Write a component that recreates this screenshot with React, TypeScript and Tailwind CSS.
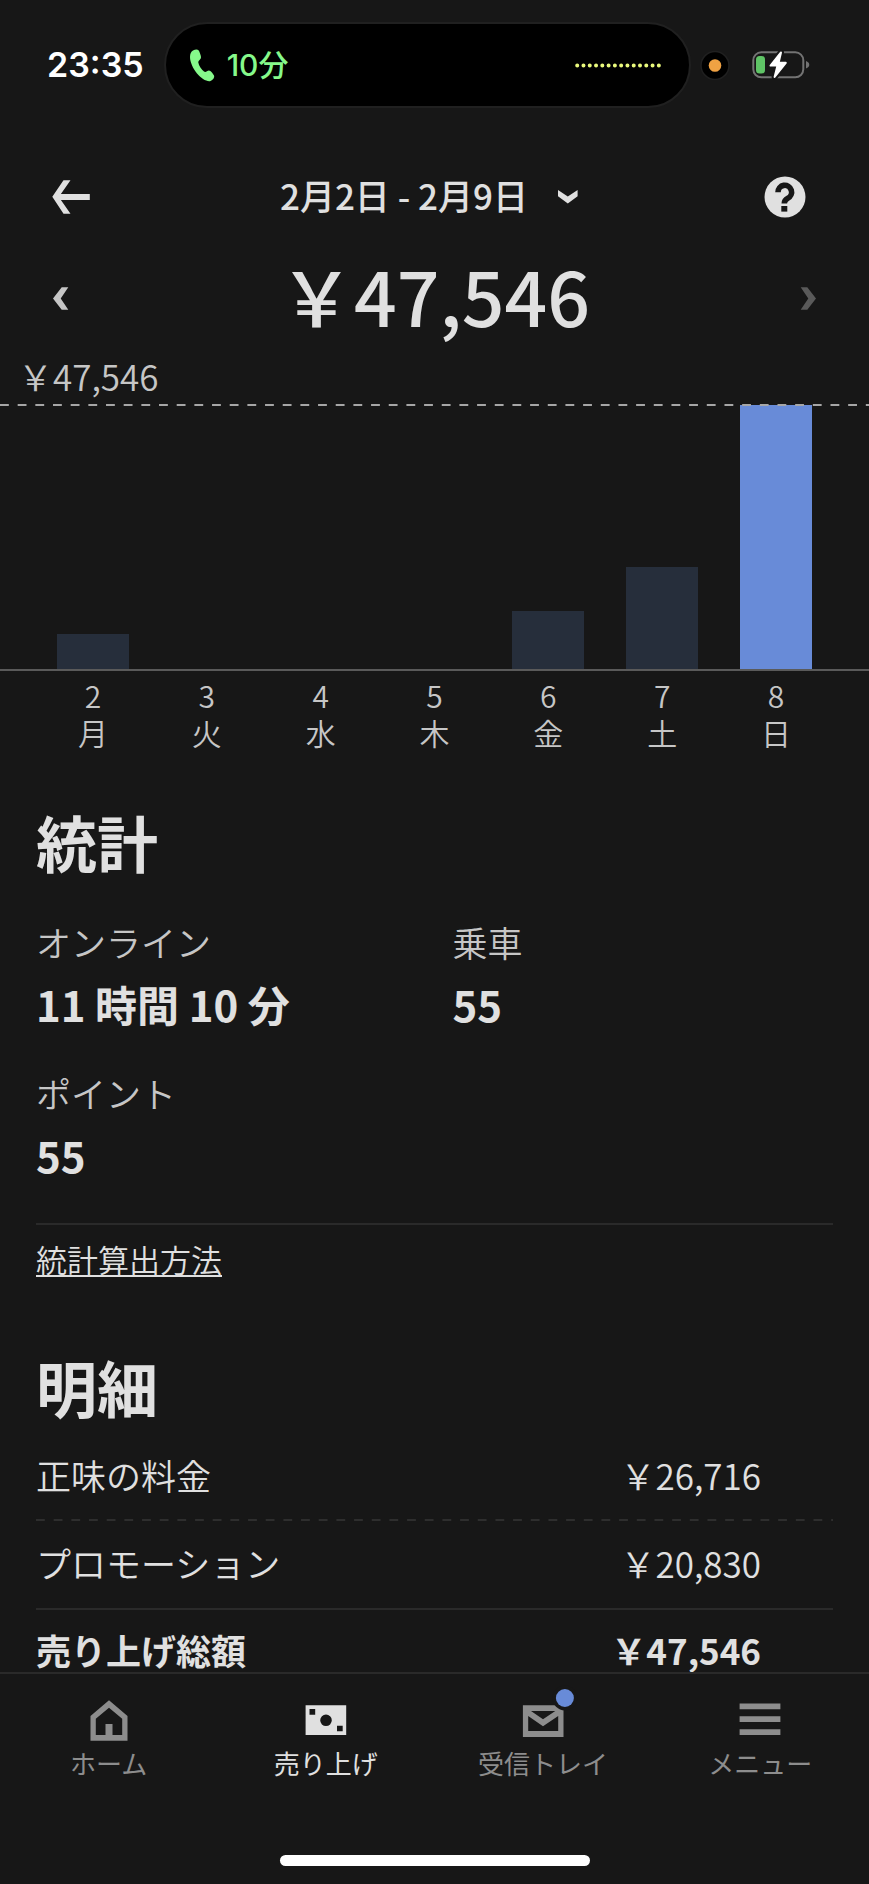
import React from "react";

type Day = { day: string; weekday: string; percent: number; active?: boolean };

const days: Day[] = [
  { day: "2", weekday: "月", percent: 13.2 },
  { day: "3", weekday: "火", percent: 0 },
  { day: "4", weekday: "水", percent: 0 },
  { day: "5", weekday: "木", percent: 0 },
  { day: "6", weekday: "金", percent: 22 },
  { day: "7", weekday: "土", percent: 38.6 },
  { day: "8", weekday: "日", percent: 99.6, active: true },
];

const stats = [
  { label: "オンライン", value: "11 時間 10 分" },
  { label: "乗車", value: "55" },
  { label: "ポイント", value: "55" },
];

function DashedRule({ className }: { className: string }) {
  return (
    <svg className={className} height="2" width="100%" aria-hidden="true">
      <line x1="0" y1="1" x2="100%" y2="1" stroke="currentColor" strokeWidth="2" strokeDasharray="8.83 8.84" />
    </svg>
  );
}

function StatusBar() {
  return (
    <div className="flex h-[130px] items-center pr-[59px] pl-[47px] font-['Inter','Noto_Sans_CJK_JP',sans-serif]">
      <span className="text-[34px] leading-10 font-semibold text-white">23:35</span>
      <div className="ml-5 flex h-[86px] flex-1 items-center justify-between rounded-full border-2 border-[#202020] bg-black pr-7 pl-6">
        <div className="flex items-center gap-3 text-[#86f98b]">
          <svg width="25" height="33" viewBox="0 0 25 33" fill="currentColor" aria-hidden="true">
            <path d="M3 1.500C5 .3 7.500 0 8.500 1.200 9.500 2.500 10.800 6 11 8c.2 2.500-3 3.500-2.700 5.500.5 3 3.200 7 5.700 9 1.800 1.500 3-1 5-1 1.500.1 4 3 5 5 .8 2-1 4.500-3.500 5.500-3.500 1-9.500-2.500-13.500-7.500S0 13 0 8c0-3 1-5.400 3-6.500Z" />
          </svg>
          <span className="text-[30px] leading-10 font-medium">10分</span>
        </div>
        <svg width="86" height="5" viewBox="0 0 86 5" aria-hidden="true">
          <line x1="2.200" y1="2.500" x2="84" y2="2.500" stroke="#e9f97c" strokeWidth="4" strokeLinecap="round" strokeDasharray="0 6.280" />
        </svg>
      </div>
      <svg className="ml-[9px]" width="30" height="30" viewBox="0 0 30 30" aria-hidden="true">
        <circle cx="15" cy="15.500" r="14" fill="#000" stroke="#202020" strokeWidth="1.500" />
        <circle cx="15" cy="15.500" r="6.300" fill="#f0a243" />
      </svg>
      <svg className="ml-[21px]" width="59" height="30" viewBox="0 0 59 30" aria-hidden="true">
        <rect x="2.300" y="2.300" width="50" height="25" rx="8" fill="none" stroke="#737373" strokeWidth="2" />
        <path d="M55 11c2 .7 3.300 2 3.300 3.700S57 17.700 55 18.400Z" fill="#737373" />
        <rect x="5" y="6" width="9" height="17.500" rx="3.500" fill="#5fc466" />
        <path d="M30 2.500 19.500 15.600h7L23.600 27 34.800 12.800h-7.200Z" fill="#171717" stroke="#171717" strokeWidth="6" strokeLinejoin="round" />
        <path d="M30 2.500 19.500 15.600h7L23.600 27 34.800 12.800h-7.200Z" fill="#fff" stroke="#fff" strokeWidth="2" strokeLinejoin="round" />
      </svg>
    </div>
  );
}

function Header() {
  return (
    <header className="mt-2 flex h-[118px] items-center justify-between pr-[63px] pl-[52px]">
      <button type="button" aria-label="戻る" className="w-[42px]">
        <svg width="39" height="34" viewBox="0 0 39 34" fill="currentColor" aria-hidden="true">
          <path d="M.3 16.800 11.500.3h7L8.900 14H37.800v6H8.900l9.600 13.700h-7Z" />
        </svg>
      </button>
      <button type="button" className="flex items-center gap-[30px] text-[35px] leading-12 font-medium">
        <span className="pb-1">2月2日 - 2月9日</span>
        <svg width="20" height="14" viewBox="0 0 20 14" fill="currentColor" aria-hidden="true">
          <path d="M0 0 9.800 6.600 19.600 0V6.300L9.800 13.400 0 6.300Z" />
        </svg>
      </button>
      <button type="button" aria-label="ヘルプ">
        <svg width="42" height="42" viewBox="0 0 42 42" aria-hidden="true">
          <circle cx="21" cy="21" r="20.500" fill="currentColor" />
          <path d="M14 16.200a6.800 6.800 0 1 1 9.800 6c-2.700 1.300-3.500 2.400-3.500 5.300" fill="none" stroke="#171717" strokeWidth="5.600" />
          <rect x="17.300" y="30" width="6" height="5.600" fill="#171717" />
        </svg>
      </button>
    </header>
  );
}

function WeekTotal() {
  return (
    <div className="flex h-[84px] items-center justify-between px-[53px]">
      <button type="button" aria-label="前の週" className="text-[#c6c6c6]">
        <svg width="16" height="23" viewBox="0 0 16 23" fill="currentColor" aria-hidden="true">
          <path d="M15.300.3H8.700L0 11.500 8.700 22.700h6.600L7.700 11.500Z" />
        </svg>
      </button>
      <h1 className="pb-1.5 text-[75px] leading-[76px] font-medium">￥47,546</h1>
      <button type="button" aria-label="次の週" className="text-[#5a5a5a]">
        <svg width="16" height="23" viewBox="0 0 16 23" fill="currentColor" aria-hidden="true">
          <path d="M.7.300H7.300L16 11.500 7.300 22.700H.7L8.300 11.500Z" />
        </svg>
      </button>
    </div>
  );
}

function Chart() {
  return (
    <section aria-label="日別の売り上げ" className="mt-3">
      <p className="mb-1 pl-[18px] text-[35px] leading-12 font-[350] text-[#c6c6c6]">￥47,546</p>
      <div className="relative border-b-2 border-[#5a5a5a] px-9">
        <div className="grid h-[265px] grid-cols-7 items-end">
          {days.map((d) => (
            <div
              key={d.day}
              className={d.active ? "mx-auto w-[72px] bg-[#688bd8]" : "mx-auto w-[72px] bg-[#262e3b]"}
              style={{ height: `${d.percent}%` }}
            />
          ))}
        </div>
        <DashedRule className="absolute top-0 left-0 text-[#a6a6a6]" />
      </div>
      <div className="grid grid-cols-7 px-9 pt-1.5 text-center text-[30px] leading-[37px] font-[350] text-[#c6c6c6]">
        {days.map((d) => (
          <p key={d.day}>
            {d.day}
            <br />
            {d.weekday}
          </p>
        ))}
      </div>
    </section>
  );
}

function Stats() {
  return (
    <section className="px-9 pt-[55px]">
      <h2 className="text-[61px] leading-[72px] font-bold">統計</h2>
      <dl className="mt-10 grid grid-cols-2 gap-x-9 gap-y-[35px]">
        {stats.map((s) => (
          <div key={s.label}>
            <dt className="text-[35px] leading-12 font-[350] text-[#c6c6c6]">{s.label}</dt>
            <dd className="mt-2 text-[42px] leading-[60px] font-bold">{s.value}</dd>
          </div>
        ))}
      </dl>
      <div className="mt-[38px] border-t-2 border-[#2a2a2a] pt-[10px]">
        <a href="#method" className="text-[31px] leading-12 font-[350] underline decoration-2 underline-offset-3">
          統計算出方法
        </a>
      </div>
    </section>
  );
}

function Breakdown() {
  return (
    <section className="px-9 pt-[68px]">
      <h2 className="text-[61px] leading-[72px] font-bold">明細</h2>
      <dl className="mt-3 text-[35px] leading-12 font-[350]">
        <div className="flex justify-between pt-4 pr-[72px] pb-5">
          <dt>正味の料金</dt>
          <dd>￥26,716</dd>
        </div>
        <DashedRule className="block text-[#2e2e2e]" />
        <div className="flex justify-between border-b-2 border-[#2a2a2a] pt-[18px] pb-[21px]">
          <dt>プロモーション</dt>
          <dd className="pr-[72px]">￥20,830</dd>
        </div>
        <div className="flex justify-between pt-5 pr-[72px] leading-10 font-bold">
          <dt>売り上げ総額</dt>
          <dd>￥47,546</dd>
        </div>
      </dl>
    </section>
  );
}

const tabs = [
  {
    label: "ホーム",
    icon: (
      <path
        fillRule="evenodd"
        fill="currentColor"
        d="M24 4.300 42.500 20V44.700H5.500V20ZM24 11.700 10.800 22.700V39H20.500V28h7V39h9.700V22.700Z"
      />
    ),
  },
  {
    label: "売り上げ",
    active: true,
    icon: (
      <path
        fillRule="evenodd"
        fill="currentColor"
        d="M3.600 9.300H44.200V39H3.600ZM7.500 13v5.700h5.700V13ZM35 29.700v5.500h5.700v-5.500ZM24 18.500a5.800 5.800 0 1 0 0 11.600 5.800 5.800 0 0 0 0-11.600Z"
      />
    ),
  },
  {
    label: "受信トレイ",
    icon: (
      <>
        <path
          fillRule="evenodd"
          fill="currentColor"
          d="M3.900 9.300H44.500V41H3.900ZM9.200 20V35H39.200V20L24 30.300ZM12 15 24 23.300 36.300 15Z"
        />
        <circle cx="45.900" cy="2" r="12.500" fill="#171717" />
        <circle cx="45.900" cy="2" r="9" fill="#688bd8" />
      </>
    ),
  },
  {
    label: "メニュー",
    icon: <path fill="currentColor" d="M3.600 7.500H44.400v5.700H3.600ZM3.600 20.300H44.400V26H3.600ZM3.600 33.200H44.400v5.700H3.600Z" />,
  },
];

function TabBar() {
  return (
    <footer className="sticky bottom-0 mt-auto border-t-2 border-[#2a2a2a] bg-[#171717] pb-[18px]">
      <nav className="grid grid-cols-4 pt-[22px]">
        {tabs.map((t) => (
          <button
            key={t.label}
            type="button"
            className={
              t.active
                ? "flex flex-col items-center text-[26px] leading-[38px] text-[#e0e0e0]"
                : "flex flex-col items-center text-[26px] leading-[38px] text-[#8d8d8d]"
            }
          >
            <svg width="48" height="48" viewBox="0 0 48 48" className="overflow-visible" aria-hidden="true">
              {t.icon}
            </svg>
            {t.label}
          </button>
        ))}
      </nav>
      <div className="mx-auto mt-[73px] h-[11px] w-[310px] rounded-full bg-white" />
    </footer>
  );
}

export default function App() {
  return (
    <div
      lang="ja"
      className="flex min-h-screen flex-col bg-[#171717] font-['Noto_Sans_CJK_JP',sans-serif] text-[#e0e0e0]"
    >
      <StatusBar />
      <Header />
      <main>
        <WeekTotal />
        <Chart />
        <Stats />
        <Breakdown />
      </main>
      <TabBar />
    </div>
  );
}
